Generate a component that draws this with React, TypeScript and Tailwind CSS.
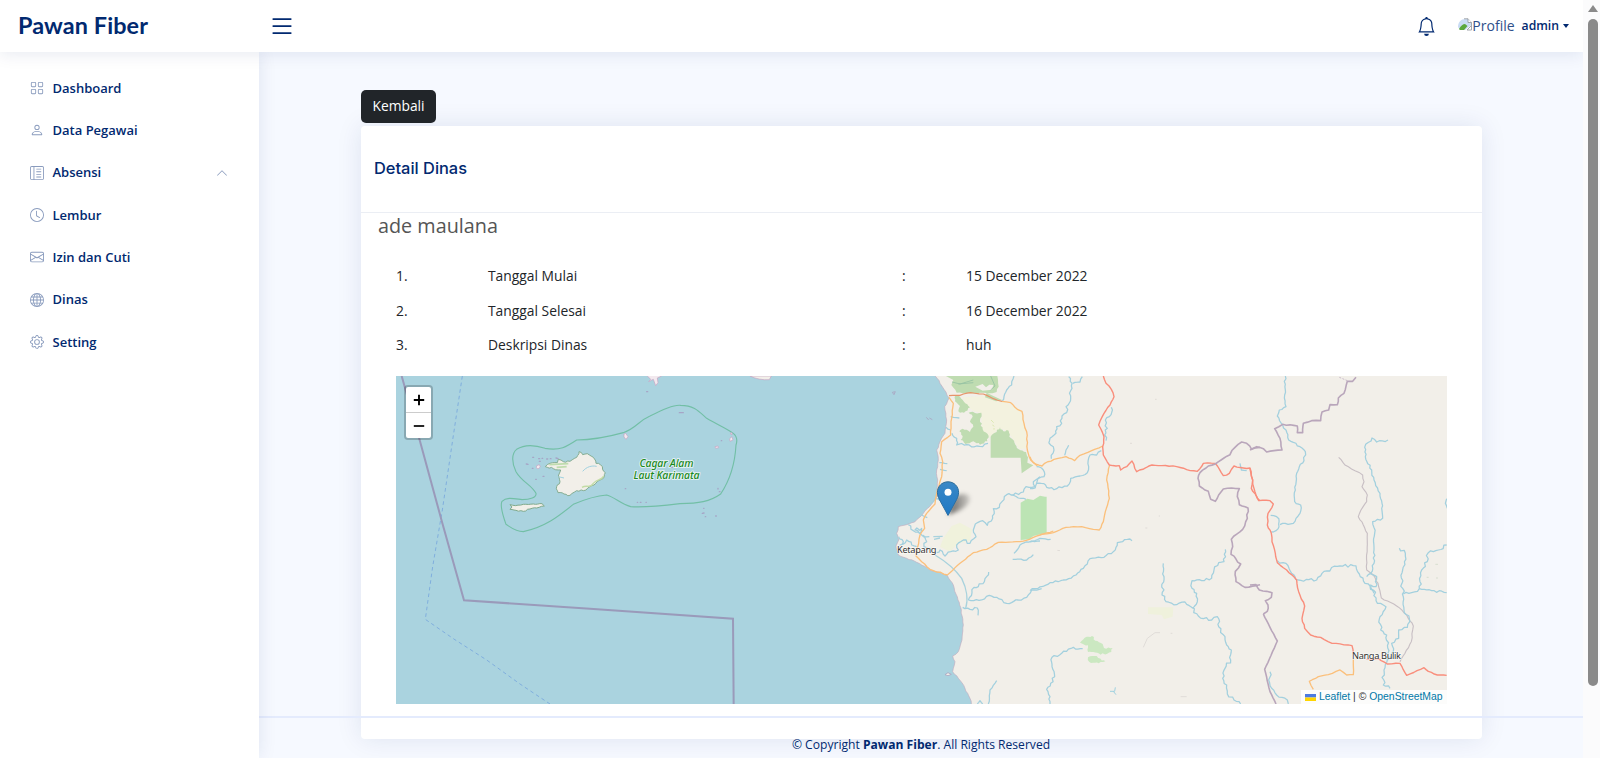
import React from "react";
import {
  BsBell,
  BsChevronUp,
  BsClock,
  BsEnvelope,
  BsGear,
  BsGlobe,
  BsGrid,
  BsLayoutTextSidebarReverse,
  BsList,
  BsPerson,
} from "react-icons/bs";

const menu = [
  { label: "Dashboard", Icon: BsGrid },
  { label: "Data Pegawai", Icon: BsPerson },
  { label: "Absensi", Icon: BsLayoutTextSidebarReverse, open: true },
  { label: "Lembur", Icon: BsClock },
  { label: "Izin dan Cuti", Icon: BsEnvelope },
  { label: "Dinas", Icon: BsGlobe },
  { label: "Setting", Icon: BsGear },
];

const rows = [
  ["1.", "Tanggal Mulai", "15 December 2022"],
  ["2.", "Tanggal Selesai", "16 December 2022"],
  ["3.", "Deskripsi Dinas", "huh"],
];

/* Subdivides a polyline and shifts the new points sideways, for natural looking rivers and borders. */
function rough(points: string, amp: number, step = 11): string {
  const pts = points.split(" ").map((p) => p.split(",").map(Number));
  let seed = pts[0][0] * 0.7 + pts[0][1] * 1.3;
  const rnd = () => {
    seed += 1;
    const v = Math.sin(seed * 12.9898) * 43758.5453;
    return v - Math.floor(v) - 0.5;
  };
  let d = `M${pts[0][0]} ${pts[0][1]}`;
  for (let i = 1; i < pts.length; i++) {
    const [x0, y0] = pts[i - 1];
    const [x1, y1] = pts[i];
    const len = Math.hypot(x1 - x0, y1 - y0) || 1;
    const n = Math.max(1, Math.round(len / step));
    for (let k = 1; k < n; k++) {
      const o = rnd() * 2 * amp;
      const x = x0 + ((x1 - x0) * k) / n - ((y1 - y0) / len) * o;
      const y = y0 + ((y1 - y0) * k) / n + ((x1 - x0) / len) * o;
      d += `L${x.toFixed(1)} ${y.toFixed(1)}`;
    }
    d += `L${x1} ${y1}`;
  }
  return d;
}

type LineProps = { p: string; amp?: number };
const River = ({ p, amp = 5 }: LineProps) => (
  <path d={rough(p, amp, 8)} fill="none" stroke="#a3d0de" strokeWidth="3.8" strokeLinejoin="round" />
);
const Road = ({ p, amp = 1.5 }: LineProps) => (
  <path d={rough(p, amp)} fill="none" stroke="#fbc07c" strokeWidth="4" strokeLinejoin="round" />
);
const Trunk = ({ p, amp = 2 }: LineProps) => (
  <path d={rough(p, amp)} fill="none" stroke="#f98e7c" strokeWidth="4.2" strokeLinejoin="round" />
);
const Border = ({ p, amp = 2.5 }: LineProps) => (
  <path d={rough(p, amp)} fill="none" stroke="#b9a6bb" strokeWidth="4.8" strokeLinejoin="round" />
);

const Sea = () => (
  <g transform="translate(390 370) scale(.33333)">
    <path d="M217 18L188 210L157 420L128 590L106 748L190 806L290 870L390 942L480 1002" fill="none" stroke="#7faedd" strokeWidth="3" strokeDasharray="11 9" />
    <path d="M35 18L90 214L155 452L222 691L600 716L1029 746L1031 1002" fill="none" stroke="#9a9aba" strokeWidth="6" />
    <path
      d="M348 463C338 435 330 405 336 394C350 380 372 386 396 389C420 389 440 382 438 370C425 345 395 335 378 305C365 280 364 250 380 238C405 222 435 225 465 235C510 243 530 230 560 210C610 210 650 202 700 188C740 174 745 153 780 138C820 118 850 104 872 106C915 106 930 128 950 145C985 165 1010 175 1030 190C1042 200 1043 210 1038 225C1035 280 1020 330 992 372C960 395 925 400 870 401C820 407 760 413 722 410C690 400 675 382 650 375C610 378 580 390 550 403C510 435 470 470 400 485C375 485 360 470 348 463Z"
      fill="none" stroke="#72bfa6" strokeWidth="3.4"
    />
    <path
      d={rough("560,262 567,245 578,254 592,251 610,262 618,280 632,285 646,308 640,325 622,334 612,345 600,350 580,362 560,362 540,376 522,372 504,368 500,350 510,335 505,318 512,300 490,296 466,290 480,280 502,278 505,268 520,275 540,274 560,262", 2.5, 7)}
      fill="#f2efe9" stroke="#7fa98c" strokeWidth="2.8"
    />
    <path d="M578 304C590 290 605 286 620 289M505 320L522 324" fill="none" stroke="#9fd0df" strokeWidth="3" />
    <path d="M576 352C590 343 600 357 610 340C622 325 635 332 641 318" fill="none" stroke="#c3dca6" strokeWidth="4" />
    <path d="M478 284L535 281M500 292L530 290" fill="none" stroke="#bfdcae" strokeWidth="5" />
    <path
      d={rough("360,404 376,407 400,403 430,402 456,401 463,408 440,414 420,417 400,424 378,421 360,418 366,411 360,404", 1.8, 7)}
      fill="#f2efe9" stroke="#7fa98c" strokeWidth="3"
    />
    <g fill="#f2e9ee" stroke="#c5a3c2" strokeWidth="2">
      <path d="M772 18L782 28L776 35L790 28L797 47L804 38L802 24L815 18" />
      <path d="M440 287L448 284L451 291L444 297L439 293Z" />
      <path d="M702 192L707 190L714 200L708 208L702 201Z" />
      <path d="M1019 206L1026 200L1029 210L1020 214ZM1020 190L1026 188L1026 195Z" />
      <path d="M975 230L984 228L986 233L977 235Z" />
    </g>
    <g fill="none" stroke="#a495bd" strokeWidth="4" strokeLinecap="round" opacity=".75">
      <path d="M409 282l5 1M428 262h3M446 266h3M456 265h2M470 267h3M481 266h2M498 264l6 2M427 295h2M437 328h2M459 319h3M448 274h3M770 65h3M868 128l12 0M994 212h1M984 355v2M988 365h2M706 356h1M742 397h1M751 397h2M768 397h1M937 430l5 -1M941 415h1M946 440h1M977 438h2M843 292h4" />
    </g>
  </g>
);

const Coast = () => (
  <g transform="translate(740 370) scale(.33333)">
    <path d="M30 18C45 26 70 31 88 29L94 18Z" fill="#f2efe9" stroke="#c5a3c2" strokeWidth="2" />
    <path
      d={rough("583,10 600,40 612,58 627,84 614,110 620,150 615,190 600,215 590,240 595,270 590,300 592,340 592,380 575,402 550,430 524,456 500,464 475,470 470,490 476,510 468,528 475,555 500,565 530,577 570,600 622,616 640,645 654,690 664,720 670,765 666,810 655,845 638,858 645,875 638,905 655,925 675,955 690,985 696,1010 2140,1010 2140,10", 1.8, 9)}
      fill="#f2efe9" stroke="#c2adbf" strokeWidth="2"
    />
    <path d="M615 914L624 908L634 913L624 917Z" fill="#f2efe9" stroke="#a9a3c0" strokeWidth="2.4" />
    <path d="M457 67L466 65L462 74ZM559 142L566 150M568 144L577 149" fill="none" stroke="#a9a3c0" strokeWidth="2.5" />
    <path d="M668 82L740 78L800 98L842 122L856 180L858 235L838 238L815 200L790 176L768 184L748 203L726 180L724 130L700 122L678 108Z" fill="#f2f3dc" opacity=".8" />
    <path d="M610 505L635 468L660 458L696 478L690 512L655 520L630 545L600 530Z" fill="#f0f2dc" />
    <path d={rough("618,18 640,30 634,45 650,68 690,70 720,68 745,70 770,66 776,50 772,18", 2)} fill="#bfdcb1" />
    <path d="M706 50L728 42L738 52L748 44L760 45L756 59L728 62Z" fill="#f2efe9" />
    <path d="M636 36L660 42L700 30M655 42L700 38M752 18L765 48L752 60" fill="none" stroke="#95c2a2" strokeWidth="2.5" />
    <path d="M740 68L760 78L786 90L768 94L735 82Z" fill="#bfdcb1" />
    <path d={rough("645,78 660,80 672,95 690,112 672,128 655,124 660,108 645,94 645,78", 3, 6)} fill="#bfdcb1" />
    <path d={rough("686,128 724,128 720,150 728,178 746,198 742,214 720,224 700,214 676,222 662,210 668,198 658,184 668,176 690,186 700,170 690,155 698,140 686,128", 3, 6)} fill="#bfdcb1" />
    <path d={rough("752,200 770,186 780,172 790,184 806,182 808,200 822,212 836,238 858,246 864,262", 3, 6) + "L862 278L880 286L845 310L842 263L752 263Z"} fill="#bfdcb1" />
    <path d="M842 398L862 386L880 390L900 377L915 380L920 380L920 488L880 498L868 508L842 510Z" fill="#bce4b4" />
    <path d="M753 150l8 8M757 165l6 4M762 174v5" stroke="#dce8b4" strokeWidth="3" />
    <River p="822,18 815,45 800,60 792,80 786,94" amp={3} />
    <River p="900,320 880,335 885,350 858,350 850,366 820,375 800,374 786,395 778,412 760,416 758,445 742,466 728,452 706,462 700,480 708,500 690,520 670,510 650,525 655,540 632,545 615,558 600,540 590,548" amp={4} />
    <River p="818,375 835,384 858,388" amp={2} />
    <River p="636,190 650,205 650,225 680,224 710,228 728,230 744,220" />
    <River p="598,278 622,281" amp={1} />
    <River p="600,298 620,302" amp={1} />
    <River p="632,140 658,144" amp={2} />
    <River p="618,172 632,180" amp={2} />
    <River p="505,464 520,482 540,490 545,475 525,480 545,495 568,500" />
    <River p="476,500 490,515 480,525 500,510 515,525 530,530" />
    <River p="550,495 560,515 552,530 575,535" />
    <River p="545,435 562,443" amp={1} />
    <River p="575,400 590,385 604,392" amp={1} />
    <path d="M585 555C610 570 640 590 665 625C680 655 685 690 677 715M580 500L608 499M582 508L600 504" fill="none" stroke="#a8d2dd" strokeWidth="4" />
    <River p="746,606 735,626 715,650 702,652 696,668 685,690" />
    <River p="685,690 725,690 748,676 770,682 800,700 835,690 860,682 875,660 905,656" amp={3} />
    <River p="668,712 690,718 712,714 714,736" amp={3} />
    <River p="822,550 840,525 858,516 900,513" amp={2} />
    <River p="818,568 860,570 880,554" amp={2} />
    <River p="770,932 750,960 745,1002" amp={2} />
    <River p="712,1002 720,992 728,1002" amp={1} />
    <Road p="627,82 640,100 635,145 632,195 605,215 600,250 608,275 605,320 590,370 585,402 560,430 550,450 554,475 540,495 536,520 530,545 528,558 545,575 570,598 622,615" />
    <Road p="622,615 660,580 700,548 740,538 775,517 840,515 868,508 900,495 940,483" amp={1} />
    <path d={rough("627,77 660,76 692,68 730,72 760,86 786,94", 1.5)} fill="none" stroke="#e7946a" strokeWidth="3.6" />
    <Road p="786,94 812,98 832,118 846,124 852,160 860,185 862,240 872,270 892,288" />
  </g>
);

const Inland = () => (
  <g transform="translate(1030 370) scale(.33333)">
    <path d={rough("150,818 170,800 186,798 196,812 218,822 222,834 248,834 244,846 212,854 190,846 174,846 174,826 150,818", 3, 6)} fill="#cbe8c1" />
    <path d={rough("174,862 200,858 212,866 226,874 206,880 178,876 174,862", 3, 6)} fill="#cbe8c1" />
    <path d="M354 712L430 712L428 740L402 748L395 735L354 732Z" fill="#eff1dc" />
    <path d="M340 832L352 805L375 788L390 788M82 541l8 1M452 980l18 0M300 220h6M375 88h5M346 474h6M422 790h5M388 436v4" fill="none" stroke="#e0dcd8" strokeWidth="3" />
    <River p="116,20 126,40 122,85 108,110 110,128 96,138 95,160 80,170 78,190 60,205 62,225 72,240 64,266" />
    <River p="128,40 150,36 157,20" amp={3} />
    <River p="116,226 108,240 104,256" amp={2} />
    <River p="244,112 238,140 226,150 232,175 224,195 228,212" />
    <River p="214,242 200,255 180,255 176,290 172,308 150,318 122,325 112,348 80,356 50,352 34,340 20,340 8,356 0,356" />
    <River p="20,290 40,300 42,320 24,326 20,340" />
    <River p="306,512 292,508 262,518 250,545 222,562 180,566 160,595 138,615 100,630 60,638 0,662" amp={3.5} />
    <River p="0,516 30,505 62,508" amp={2} />
    <River p="400,580 402,620 396,675 408,695 440,704 465,696 485,712 505,738 545,750 562,740 566,770 585,800 590,825 604,840 602,870 585,895 578,925 590,945 592,972 612,990 632,1002" />
    <River p="586,538 582,575 566,578 552,600 545,625 515,632 486,632 486,655 500,670 502,695 488,715" amp={3.5} />
    <River p="158,836 130,832 95,850 66,862 66,890 74,920 62,940 50,958 60,980 60,1002" amp={4} />
    <path d="M240 964L254 964L256 952M250 964L258 974" fill="none" stroke="#9fd0df" strokeWidth="3" />
    <River p="630,280 634,300 650,302" amp={2} />
    <Road p="0,260 10,278 36,288 44,280 72,268 108,260 134,272 150,256 185,242 218,228" amp={2} />
    <Road p="239,286 230,330 238,385 226,425 220,455 208,480 190,478 155,470 108,472 70,488 30,494" />
    <Trunk p="220,18 228,40 244,58 252,80 240,105 222,130 206,165 222,200 218,230 220,255 238,285 268,287 272,300 290,290 306,273 320,305 366,285 395,287 440,290 470,299 502,304 520,280 556,280" />
    <Trunk p="556,280 580,317 598,310 612,288 640,294 660,294 668,330 672,355 682,385 690,392" />
    <Border p="690,232 665,238 650,220 635,216 615,232 600,254 582,264 556,282 535,288 510,308 504,325 508,348 535,364 542,388 556,394 566,375 580,357 605,354 628,356 622,380 628,404 654,414 652,445 638,478 604,508 608,530 603,553 632,582 616,604 618,635 645,652 690,644" />
  </g>
);

const East = () => (
  <g transform="translate(1250 370) scale(.33333)">
    <path d={rough("266,262 285,285 315,302 338,315 342,335 336,350 352,375 350,395 338,412 325,440 340,465 352,490 350,600 370,615 384,640 394,684 440,708 470,735 490,768 484,815 465,850 450,875", 1.5)} fill="none" stroke="#c8bfc4" strokeWidth="3.4" />
    <River p="106,18 104,75 108,110 88,120 82,138 98,165 108,180 116,210 150,230 166,245 162,272 148,290 140,310 136,360 134,395 152,405 150,430 138,445 130,460 90,464" amp={3} />
    <River p="62,436 80,440 86,462 78,482 64,486" />
    <River p="414,210 380,216 366,204 344,232 346,260 365,300 372,330 390,370 396,400 398,445 368,455 374,490 372,540 372,580 362,610 350,620" amp={3.5} />
    <River p="82,572 108,580 125,610 145,630 200,630 222,604 270,588 318,588 328,612 345,640 370,660 382,700 408,710 390,740 392,780 410,795 414,850 412,870 402,900 400,945 420,955" />
    <River p="360,610 380,620 378,650 362,645 372,670" />
    <River p="448,535 466,550 458,600 456,640 460,680 462,720 478,745 472,772 446,780 446,805 425,820 430,845 415,870" />
    <River p="590,525 565,540 535,548 532,575 515,600 510,635 508,656 485,668 460,672" />
    <River p="508,656 545,662 590,668" amp={3} />
    <River p="590,386 586,400 592,415" amp={1} />
    <River p="60,905 56,930 65,955 80,975 112,990 115,1002" />
    <Border p="318,22 308,34 292,34 282,70 265,84 262,104 240,104 236,120 216,126 212,152 185,152 160,160 158,188 142,188 142,168 98,163 74,176 90,205 96,240 72,242 50,246 40,236 20,230 0,240" amp={1.5} />
    <path d="M268 22L292 32" stroke="#c9bac9" strokeWidth="3" strokeDasharray="6 4" />
    <Border p="0,645 18,644 28,660 50,664 66,668 64,682 46,692 54,705 52,724 40,732" amp={2} />
    <Border p="40,732 60,772 82,813 44,898 60,965 78,1002" amp={0.6} />
    <Trunk p="0,296 8,330 4,355 20,380 26,392 60,392 70,402 54,430 52,465 64,490 66,515 76,550 82,578 110,600 140,630 146,665 164,708 156,745 164,775 182,795 212,802 246,820 306,827 310,850" amp={1.5} />
    <Trunk p="350,868 385,866 412,882 450,880 470,916 522,893 535,904 562,915 590,916" amp={1} />
    <Road p="310,866 310,914 290,915 270,900 235,914 205,920 178,934 190,958" amp={1} />
    <path d="M556 583h8M530 622h6M558 624h6" stroke="#d8ded0" strokeWidth="3" />
  </g>
);

const Marker = () => (
  <g>
    <defs>
      <linearGradient id="pin" x1="0" x2="0" y1="0" y2="1">
        <stop offset="0" stopColor="#2e6c97" />
        <stop offset="1" stopColor="#2a70a8" />
      </linearGradient>
      <linearGradient id="pinFill" x1="0" x2="0" y1="0" y2="1">
        <stop offset="0" stopColor="#3a88c6" />
        <stop offset="1" stopColor="#1f78c4" />
      </linearGradient>
      <linearGradient id="shade" x1="0" x2="1" y1="0" y2="0">
        <stop offset="0" stopColor="#000" stopOpacity=".6" />
        <stop offset="1" stopColor="#000" stopOpacity=".15" />
      </linearGradient>
      <filter id="soft" x="-50%" y="-50%" width="200%" height="200%">
        <feGaussianBlur stdDeviation="2" />
      </filter>
    </defs>
    <path d="M948 515L953 499C960 491 973 493 969 502C966 508 957 512 948 515Z" fill="url(#shade)" filter="url(#soft)" />
    <path
      d="M948 481.8C941.8 481.8 937.4 486.7 937.4 492.3C937.4 494.8 938.2 497.2 939.3 499.4L948 515.4L956.7 499.4C957.8 497.2 958.6 494.8 958.6 492.3C958.6 486.7 954.2 481.8 948 481.8Z"
      fill="url(#pinFill)" stroke="url(#pin)" strokeWidth="1"
    />
    <circle cx="948" cy="492.3" r="3.5" fill="#fff" />
  </g>
);

const MapView = () => (
  <div className="relative h-[328px] w-[1051px] overflow-hidden bg-[#aad3df]">
    <svg viewBox="396 376 1051 328" width="1051" height="328" className="block">
      <Sea />
      <Coast />
      <Inland />
      <East />
      <g className="font-['Noto_Sans',sans-serif]" strokeLinejoin="round" paintOrder="stroke">
        <g fontSize="10.5" fontStyle="italic" fontWeight="500" fill="#1c8a1c" stroke="#ffffff" strokeOpacity=".65" strokeWidth="2" textAnchor="middle">
          <text x="666.5" y="466.5" textLength="54">Cagar Alam</text>
          <text x="666.5" y="478.8" textLength="66">Laut Karimata</text>
        </g>
        <g fontSize="9.3" fill="#333" stroke="#ffffff" strokeOpacity=".6" strokeWidth="1.6">
          <text x="897" y="553.2" textLength="39.5">Ketapang</text>
          <text x="1352" y="659" textLength="49">Nanga Bulik</text>
        </g>
      </g>
      <Marker />
    </svg>
    <div className="absolute left-[8px] top-[9px] flex w-[29px] flex-col rounded-[4px] border-2 border-black/20 bg-white bg-clip-padding">
      <button className="flex h-[26px] items-center justify-center border-b border-[#ccc]">
        <svg width="12" height="12" viewBox="0 0 12 12"><path d="M6 .8V11.2M.8 6H11.2" stroke="#000" strokeWidth="1.9" /></svg>
      </button>
      <button className="flex h-[25px] items-center justify-center">
        <svg width="12" height="12" viewBox="0 0 12 12"><path d="M.8 6H11.2" stroke="#000" strokeWidth="1.7" /></svg>
      </button>
    </div>
    <div className="absolute bottom-0 right-0 flex h-[14px] w-[146px] items-center whitespace-nowrap bg-white/80 pl-1 font-['Liberation_Sans',sans-serif] text-[10.4px] text-[#333]">
      <svg width="11" height="7" viewBox="0 0 11 7" className="mr-[3px]">
        <path d="M0 0H11V3.5H0Z" fill="#4c7be1" />
        <path d="M0 3.5H11V7H0Z" fill="#ffd500" />
      </svg>
      <span className="text-[#0078a8]">Leaflet</span>
      <span className="whitespace-pre"> | © </span>
      <span className="text-[#0078a8]">OpenStreetMap</span>
    </div>
  </div>
);

const BrokenImage = () => (
  <svg width="14" height="13" viewBox="0 0 14 13" className="mb-[4px]">
    <path d="M0 9C0 4 3 1 7 1H10L13.5 4.5V7L7 12H2Z" fill="#c9dcf4" />
    <path d="M1 11C3 7.500 5 6 7 6L9.500 8L6 12H2Z" fill="#5aa83c" />
    <path d="M6 .8H10L13.500 4.500V12H9L13.500 7.500" fill="none" stroke="#a3a8ad" strokeWidth="1" />
    <path d="M10 .8V4.500H13.500" fill="#fff" stroke="#8d9297" strokeWidth=".8" />
  </svg>
);

export default function App() {
  return (
    <div className="flex h-[758px] w-[1600px] overflow-hidden bg-[#f6f9ff] font-['Open_Sans',sans-serif] text-[#212529]">
      <div className="flex w-[1583px] flex-col overflow-hidden">
        <header className="z-20 flex h-[52px] shrink-0 items-center bg-white pl-[18px] pr-[14px] text-[#012970] shadow-[0_2px_17px_rgba(1,41,112,0.1)]">
          <div className="w-[251px] font-['Lato','Noto_Sans',sans-serif] text-[23.4px] font-bold leading-none tracking-[0.1px]">Pawan Fiber</div>
          <BsList className="-ml-px size-[28px]" />
          <div className="ml-auto flex items-center">
            <BsBell className="mr-[22px] size-[19px]" />
            <BrokenImage />
            <span className="pb-px text-[14px] text-[#2f4f8a]">Profile</span>
            <span className="ml-[7px] pt-px text-[12.2px] font-semibold">admin</span>
            <span className="ml-1 border-x-[3.5px] border-t-4 border-x-transparent border-t-[#012970]" />
          </div>
        </header>
        <div className="flex min-h-0 flex-1">
          <aside className="z-10 w-[259px] shrink-0 bg-white pl-[30px] pr-[31px] pt-[15px] shadow-[0_0_17px_rgba(1,41,112,0.1)]">
            {menu.map(({ label, Icon, open }) => (
              <div key={label} className="flex h-[42.3px] items-center text-[13px] font-semibold text-[#012970]">
                <Icon className="mr-[8.5px] size-[14px] text-[#899bbd]" />
                <span className="pt-px">{label}</span>
                {open && <BsChevronUp className="ml-auto size-3 text-[#899bbd]" />}
              </div>
            ))}
          </aside>
          <main className="flex flex-1 flex-col">
            <div className="pl-[102px] pt-[38px]">
              <button className="h-[33px] w-[75px] rounded-[5px] bg-[#212529] pb-px text-[13.8px] text-white">Kembali</button>
              <section className="mt-[3px] h-[613px] w-[1121px] rounded-[4px] bg-white shadow-[0_0_26px_rgba(1,41,112,0.1)]">
                <div className="flex h-[87px] items-center border-b border-[#ebeef4] pb-px pl-[13px] font-['Inter',sans-serif] text-[16.4px] font-medium text-[#012970]">Detail Dinas</div>
                <h5 className="pl-[17px] text-[19.8px] leading-[26px] text-[#555]">ade maulana</h5>
                <div className="mt-[20.5px] pl-[35px]">
                  {rows.map(([no, name, value]) => (
                    <div key={no} className="grid h-[34.5px] grid-cols-[92px_414px_64px_1fr] items-center text-[13.83px]">
                      <span>{no}</span>
                      <span>{name}</span>
                      <span>:</span>
                      <span>{value}</span>
                    </div>
                  ))}
                  <div className="mt-[13px]">
                    <MapView />
                  </div>
                </div>
              </section>
            </div>
            <footer className="relative -mt-[23px] h-[42px] shrink-0 border-t-2 border-[#e4ebfd] pt-[17px] text-center text-[12.1px] leading-[20px] text-[#012970]">
              © Copyright <strong>Pawan Fiber</strong>. All Rights Reserved
            </footer>
          </main>
        </div>
      </div>
      <div className="flex flex-1 flex-col items-center bg-[#fbfbfc] pl-[2px] pt-[5px]">
        <span className="border-x-[5px] border-b-[7px] border-x-transparent border-b-[#8a8a8a]" />
        <span className="mt-[7px] h-[667px] w-[10px] rounded-full bg-[#8a8a8a]" />
      </div>
    </div>
  );
}
